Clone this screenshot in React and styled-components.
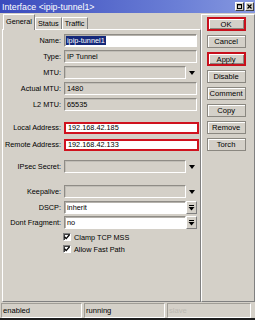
import React from 'react';
import styled, { createGlobalStyle } from 'styled-components';

const GlobalStyle = createGlobalStyle`
  html, body { margin: 0; padding: 0; }
  body {
    background: #d4d0c8;
    font-family: "Liberation Sans", Arial, sans-serif;
  }
`;

const Window = styled.div`
  width: 255px;
  height: 320px;
  display: flex;
  flex-direction: column;
  background: #d4d0c8;
  overflow: hidden;
  font-size: 7.3px;
  color: #000;
`;

const TitleBar = styled.div`
  height: 13px;
  box-sizing: border-box;
  display: flex;
  align-items: center;
  padding: 0 1px 0 2px;
  background: linear-gradient(to right, #3a4bbd, #6b7fd6 70%, #8698e0);
  color: #fff;
  font-size: 8.8px;
`;

const Title = styled.span`
  flex: 1;
  white-space: nowrap;
`;

const TitleButton = styled.div`
  width: 9px;
  height: 9px;
  box-sizing: border-box;
  margin-left: 1px;
  background: #d4d0c8;
  border: 1px solid;
  border-color: #fff #404040 #404040 #fff;
  display: flex;
  align-items: center;
  justify-content: center;
`;

const Body = styled.div`
  flex: 1;
  display: flex;
  min-height: 0;
`;

const Left = styled.div`
  width: 201px;
  padding-left: 2px;
  display: flex;
  flex-direction: column;
`;

const Tabs = styled.div`
  height: 16px;
  display: flex;
  align-items: flex-end;
  padding-left: 1px;
`;

const Tab = styled.div`
  height: ${(p) => (p.$active ? 16 : 12)}px;
  box-sizing: border-box;
  padding: 0 2px ${(p) => (p.$active ? 3 : 0)}px;
  display: flex;
  align-items: center;
  border: 1px solid;
  border-color: #fff #808080 transparent #fff;
  border-bottom: none;
  margin-bottom: ${(p) => (p.$active ? -1 : 0)}px;
  background: #d4d0c8;
  position: relative;
  z-index: ${(p) => (p.$active ? 1 : 0)};
`;

const Panel = styled.div`
  flex: 1;
  border: 1px solid;
  border-color: #fff #808080 #808080 #fff;
  padding: 4px 0 0 1px;
  display: flex;
  flex-direction: column;
`;

const Row = styled.div`
  height: 13px;
  margin-top: ${(p) => p.$mt ?? 3}px;
  display: flex;
  align-items: center;
`;

const Label = styled.div`
  width: 57px;
  text-align: right;
  padding-right: 3px;
  white-space: nowrap;
`;

const Field = styled.div`
  width: ${(p) => (p.$short ? 122 : 133)}px;
  height: ${(p) => (p.$red ? 12 : 13)}px;
  box-sizing: border-box;
  display: flex;
  align-items: center;
  padding-left: 2px;
  background: ${(p) => (p.$grey ? '#d4d0c8' : '#fff')};
  border: 1px solid;
  border-color: #8f8c86 #fff #fff #8f8c86;
  box-shadow: ${(p) => (p.$grey ? 'inset 1px 1px #c0bdb6' : 'inset 1px 1px #b5b2ac')};
  ${(p) =>
    p.$red &&
    `
    width: 135px;
    border: 2px solid #d0121e;
    box-shadow: none;
  `}
  white-space: nowrap;
`;

const Selected = styled.span`
  background: #14287a;
  color: #fff;
  padding: 0 1px;
  margin-left: -1px;
`;

const ArrowSlot = styled.div`
  width: 11px;
  height: 13px;
  display: flex;
  align-items: center;
  justify-content: center;
`;

const SpinButton = styled.div`
  width: 11px;
  height: 13px;
  box-sizing: border-box;
  border: 1px solid;
  border-color: #fff #808080 #808080 #fff;
  background: #d4d0c8;
  display: flex;
  align-items: center;
  justify-content: center;
`;

const CheckRow = styled.div`
  height: 10px;
  margin-top: ${(p) => p.$mt ?? 2}px;
  padding-left: 59px;
  display: flex;
  align-items: center;
  gap: 3px;
`;

const Box = styled.div`
  width: 8px;
  height: 8px;
  box-sizing: border-box;
  background: #fff;
  border: 1px solid;
  border-color: #808080 #fff #fff #808080;
  box-shadow: inset 1px 1px #404040;
  display: flex;
  align-items: center;
  justify-content: center;
`;

const Right = styled.div`
  width: 48px;
  margin-top: 1px;
  border: 1px solid;
  border-color: #fff #808080 #808080 #fff;
  padding: 2px 0 0 5px;
  display: flex;
  flex-direction: column;
  gap: 4px;
`;

const Button = styled.div`
  width: 39px;
  height: 13px;
  box-sizing: border-box;
  display: flex;
  align-items: center;
  justify-content: center;
  background: #d4d0c8;
  border: 1px solid #8a8780;
  box-shadow: inset 1px 1px #fff;
  font-size: 7.6px;
  ${(p) =>
    p.$red &&
    `
    height: 14px;
    border: 2px solid #c8101c;
    box-shadow: inset 1px 1px #fff, inset -1px -1px #8a8780;
  `}
`;

const StatusBar = styled.div`
  height: 16px;
  display: flex;
  padding-left: 1px;
  gap: 2px;
  box-sizing: border-box;
  padding-top: 1px;
  font-size: 7.6px;
`;

const Pane = styled.div`
  width: ${(p) => p.$w}px;
  box-sizing: border-box;
  border: 1px solid;
  border-color: #a09d96 #fff #fff #a09d96;
  padding-left: 1px;
  display: flex;
  align-items: center;
  color: ${(p) => (p.$dim ? '#bcb9b2' : '#000')};
`;

const BottomEdge = styled.div`
  height: 2px;
  background: #1e1e1e;
`;

const DownArrow = () => (
  <svg width="6" height="4" viewBox="0 0 6 4">
    <path d="M0 0H6L3 4Z" fill="#000" />
  </svg>
);

const SpinArrow = () => (
  <svg width="7" height="7" viewBox="0 0 7 7">
    <rect x="1" y="1" width="5" height="1" fill="#000" />
    <path d="M0.5 3H6.5L3.5 6.5Z" fill="#000" />
  </svg>
);

const Check = () => (
  <svg width="6" height="6" viewBox="0 0 6 6">
    <path d="M0.5 2.8L2.2 4.6L5.5 0.8" stroke="#000" strokeWidth="1.3" fill="none" />
  </svg>
);

const buttons = [
  { t: 'OK', red: true },
  { t: 'Cancel' },
  { t: 'Apply', red: true },
  { t: 'Disable' },
  { t: 'Comment' },
  { t: 'Copy' },
  { t: 'Remove' },
  { t: 'Torch' },
];

export default function App() {
  return (
    <>
      <GlobalStyle />
      <Window>
        <TitleBar>
          <Title>Interface &lt;ipip-tunnel1&gt;</Title>
          <TitleButton>
            <svg width="5" height="5" viewBox="0 0 5 5">
              <rect x="0.5" y="0.5" width="4" height="4" fill="none" stroke="#000" />
              <rect x="0" y="0" width="5" height="1.3" fill="#000" />
            </svg>
          </TitleButton>
          <TitleButton>
            <svg width="5" height="5" viewBox="0 0 5 5">
              <path d="M0.5 0.5L4.5 4.5M4.5 0.5L0.5 4.5" stroke="#000" strokeWidth="1.2" />
            </svg>
          </TitleButton>
        </TitleBar>
        <Body>
          <Left>
            <Tabs>
              <Tab $active>General</Tab>
              <Tab>Status</Tab>
              <Tab>Traffic</Tab>
            </Tabs>
            <Panel>
              <Row $mt={0}>
                <Label>Name:</Label>
                <Field><Selected>ipip-tunnel1</Selected></Field>
              </Row>
              <Row>
                <Label>Type:</Label>
                <Field $grey>IP Tunnel</Field>
              </Row>
              <Row>
                <Label>MTU:</Label>
                <Field $grey $short />
                <ArrowSlot><DownArrow /></ArrowSlot>
              </Row>
              <Row>
                <Label>Actual MTU:</Label>
                <Field $grey>1480</Field>
              </Row>
              <Row>
                <Label>L2 MTU:</Label>
                <Field $grey>65535</Field>
              </Row>
              <Row $mt={10}>
                <Label>Local Address:</Label>
                <Field $red>192.168.42.185</Field>
              </Row>
              <Row $mt={4}>
                <Label>Remote Address:</Label>
                <Field $red>192.168.42.133</Field>
              </Row>
              <Row $mt={9}>
                <Label>IPsec Secret:</Label>
                <Field $grey $short />
                <ArrowSlot><DownArrow /></ArrowSlot>
              </Row>
              <Row $mt={12}>
                <Label>Keepalive:</Label>
                <Field $grey $short />
                <ArrowSlot><DownArrow /></ArrowSlot>
              </Row>
              <Row $mt={3}>
                <Label>DSCP:</Label>
                <Field $short>inherit</Field>
                <SpinButton><SpinArrow /></SpinButton>
              </Row>
              <Row $mt={2}>
                <Label>Dont Fragment:</Label>
                <Field $short>no</Field>
                <SpinButton><SpinArrow /></SpinButton>
              </Row>
              <CheckRow $mt={3}>
                <Box><Check /></Box>
                Clamp TCP MSS
              </CheckRow>
              <CheckRow $mt={2}>
                <Box><Check /></Box>
                Allow Fast Path
              </CheckRow>
            </Panel>
          </Left>
          <Right>
            {buttons.map((b) => (
              <Button key={b.t} $red={b.red}>{b.t}</Button>
            ))}
          </Right>
        </Body>
        <StatusBar>
          <Pane $w={81}>enabled</Pane>
          <Pane $w={81}>running</Pane>
          <Pane $w={84} $dim>slave</Pane>
        </StatusBar>
        <BottomEdge />
      </Window>
    </>
  );
}
